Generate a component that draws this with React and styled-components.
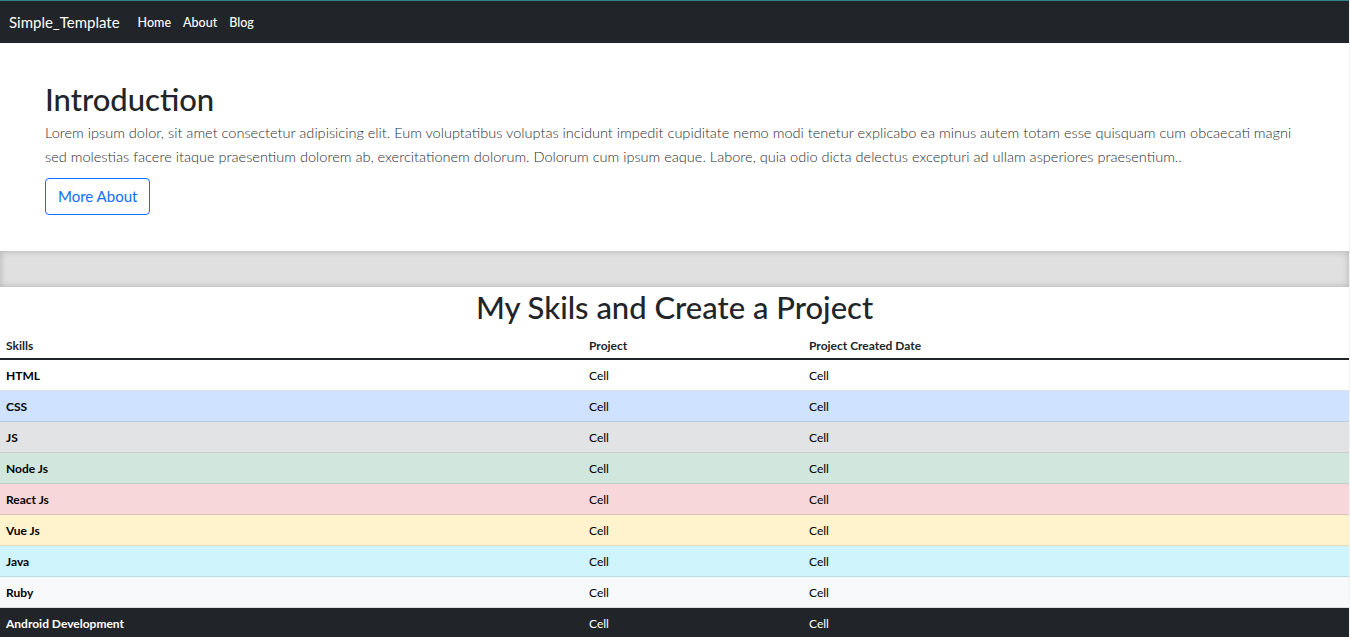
import React from 'react';
import styled, { createGlobalStyle } from 'styled-components';

const GlobalStyle = createGlobalStyle`
  html, body {
    margin: 0;
    padding: 0;
    background: #f1f1f1;
  }
  body {
    font-family: Lato, "Open Sans", "Liberation Sans", sans-serif;
    color: #212529;
  }
  #root {
    width: 1349px;
    background: #ffffff;
  }
`;

const Navbar = styled.nav`
  display: flex;
  align-items: center;
  height: 42px;
  padding: 0 9px;
  background-color: #212529;
  border-top: 1px solid #2f8585;
`;

const Brand = styled.a`
  color: #ffffff;
  font-size: 15px;
  margin-right: 18px;
  text-decoration: none;
`;

const NavLinks = styled.div`
  display: flex;
  gap: 12px;
`;

const NavLink = styled.a`
  color: #ffffff;
  font-size: 12.5px;
  font-weight: 500;
  text-decoration: none;
`;

const Hero = styled.section`
  padding: 37px 45px 36px;
`;

const HeroTitle = styled.h1`
  font-size: 31px;
  font-weight: 500;
  line-height: 38px;
  margin: 0 0 3px;
`;

const Lead = styled.p`
  font-size: 14.55px;
  font-weight: 300;
  line-height: 24px;
  margin: 0 0 9px;
  color: #2b2f33;
`;

const OutlineButton = styled.button`
  font-family: inherit;
  font-size: 15px;
  color: #0d6efd;
  background: transparent;
  border: 1px solid #0d6efd;
  border-radius: 4px;
  padding: 6px 12px;
  line-height: 23px;
  cursor: pointer;
`;

const Band = styled.div`
  height: 36px;
  background: #e0e0e0;
  box-shadow: inset 0 0 7px rgba(0, 0, 0, 0.22);
`;

const SectionTitle = styled.h2`
  font-size: 31px;
  font-weight: 500;
  line-height: 36px;
  text-align: center;
  margin: 2px 0 6px;
`;

const Table = styled.table`
  width: 100%;
  border-collapse: collapse;
  font-size: 12px;
  line-height: 18px;
  table-layout: fixed;
`;

const HeadCell = styled.th`
  text-align: left;
  font-weight: 700;
  padding: 6px 6px 3px;
  border-bottom: 2px solid #212529;
  width: ${p => p.$w || 'auto'};
`;

const variants = {
  plain: { bg: '#ffffff', border: '#dee2e6', color: '#000' },
  primary: { bg: '#cfe2ff', border: '#bacbe6', color: '#000' },
  secondary: { bg: '#e2e3e5', border: '#cbccce', color: '#000' },
  success: { bg: '#d1e7dd', border: '#bcd0c7', color: '#000' },
  danger: { bg: '#f8d7da', border: '#dfc2c4', color: '#000' },
  warning: { bg: '#fff3cd', border: '#e6dbb9', color: '#000' },
  info: { bg: '#cff4fc', border: '#badce3', color: '#000' },
  light: { bg: '#f8f9fa', border: '#dfe0e1', color: '#000' },
  dark: { bg: '#212529', border: '#373b3e', color: '#fff' },
};

const Row = styled.tr`
  background: ${p => variants[p.$variant].bg};
  color: ${p => variants[p.$variant].color};
  & > * {
    border-bottom: 1px solid ${p => variants[p.$variant].border};
  }
`;

const RowHead = styled.th`
  text-align: left;
  font-weight: 700;
  padding: 7px 6px 5px;
`;

const Cell = styled.td`
  padding: 7px 6px 5px;
`;

const skills = [
  ['HTML', 'plain'],
  ['CSS', 'primary'],
  ['JS', 'secondary'],
  ['Node Js', 'success'],
  ['React Js', 'danger'],
  ['Vue Js', 'warning'],
  ['Java', 'info'],
  ['Ruby', 'light'],
  ['Android Development', 'dark'],
];

export default function App() {
  return (
    <>
      <GlobalStyle />
      <Navbar>
        <Brand href="#">Simple_Template</Brand>
        <NavLinks>
          <NavLink href="#">Home</NavLink>
          <NavLink href="#">About</NavLink>
          <NavLink href="#">Blog</NavLink>
        </NavLinks>
      </Navbar>

      <Hero>
        <HeroTitle>Introduction</HeroTitle>
        <Lead>
          Lorem ipsum dolor, sit amet consectetur adipisicing elit. Eum voluptatibus voluptas incidunt impedit cupiditate nemo modi tenetur explicabo ea minus autem totam esse quisquam cum obcaecati magni sed molestias facere itaque praesentium dolorem ab, exercitationem dolorum. Dolorum cum ipsum eaque. Labore, quia odio dicta delectus excepturi ad ullam asperiores praesentium..
        </Lead>
        <OutlineButton>More About</OutlineButton>
      </Hero>

      <Band />

      <section>
        <SectionTitle>My Skils and Create a Project</SectionTitle>
        <Table>
          <thead>
            <tr>
              <HeadCell $w="571px">Skills</HeadCell>
              <HeadCell $w="208px">Project</HeadCell>
              <HeadCell>Project Created Date</HeadCell>
            </tr>
          </thead>
          <tbody>
            {skills.map(([name, variant]) => (
              <Row key={name} $variant={variant}>
                <RowHead scope="row">{name}</RowHead>
                <Cell>Cell</Cell>
                <Cell>Cell</Cell>
              </Row>
            ))}
          </tbody>
        </Table>
      </section>
    </>
  );
}
